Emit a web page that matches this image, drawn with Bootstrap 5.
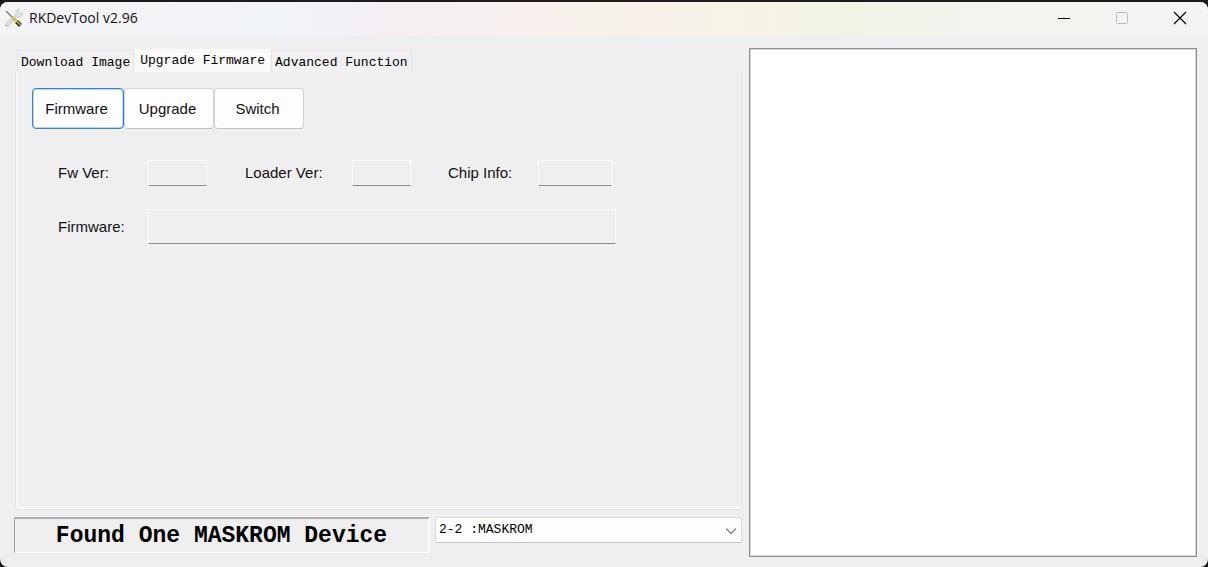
<!DOCTYPE html>
<html lang="en">
<head>
<meta charset="utf-8">
<meta name="viewport" content="width=device-width, initial-scale=1">
<title>RKDevTool v2.96</title>
<link href="https://cdn.jsdelivr.net/npm/bootstrap@5.3.0/dist/css/bootstrap.min.css" rel="stylesheet">
<style>
  body { background: #1c1a1b; color: #111; font: 15px/20px "Liberation Sans", Arial, sans-serif; }
  .page-frame { padding-top: 2px; }
  .app-window { background: #efeff0; border-radius: 8px; overflow: hidden; }
  .title-bar {
    height: 34px; padding: 0 20px 2px 5px;
    font: 14px/20px "Open Sans", "Noto Sans", sans-serif;
    background: linear-gradient(90deg, #f4f4f5 0%, #f0f3f7 24%, #f5eff4 32%, #f7f0ef 42%, #f7f1e9 54%, #f7f3e4 62%, #f1f4e4 70%, #f1f4ed 78%, #f2f4f0 86%, #f2f5f1 100%);
  }
  .title-label { gap: 6px; }
  .caption-group { gap: 42px; }
  .caption-btn { padding: 0; border: 0; background: none; width: 16px; height: 20px; display: flex; align-items: center; justify-content: center; }
  .workspace { display: grid; grid-template-columns: 13fr 8fr; gap: 7px; padding: 12px 11px 10px 14px; }
  .mono { font: 13px/16px "Liberation Mono", "Courier New", monospace; color: #000; }

  .tool-tabs { border: 0; padding-left: 3px; align-items: flex-end; flex-wrap: nowrap; }
  .tool-tabs .nav-link {
    border: 1px solid #e6e6e7; border-bottom: 0; border-radius: 0; margin: 0; color: #000;
    padding: 4px 3px; height: 22px; background: #f1f1f2; white-space: nowrap;
  }
  .tool-tabs .nav-link.active { background: #fafafb; height: 24px; padding: 4px 5px; border-color: #f3f3f4; color: #000; }
  .tool-pane { border: 1px solid #e7e7e8; border-top: 0; box-shadow: inset 2px -3px 0 #f7f7f8; padding: 16px 16px; margin-left: 1px; }

  .tool-btn {
    width: 90px; height: 41px; padding: 0 3px 0 0; border: 1px solid #d3d3d5; border-bottom-color: #c2c2c4; border-radius: 4px;
    background: #fdfdfe; color: #111; font-size: 15px; line-height: 20px;
  }
  .tool-btn.is-default { border: 1px solid #3484c8; width: 92px; box-shadow: inset 0 0 0 1px #b5d6ef; }

  .info-grid { display: grid; grid-template-columns: 90px 59px 38px 107px 59px 37px 90px 74px 4px; row-gap: 23px; align-items: center; padding: 31px 0 0 26px; }
  .info-grid .from-loader { grid-column: 4; }
  .info-grid .from-chip { grid-column: 7; }
  .info-grid .from-start { grid-column: 1; }
  .info-grid .span-rest { grid-column: 2 / -1; height: 35px; }
  .readout { min-width: 0; width: 100%; height: 26px; background: transparent; border: 1px solid #f9f9fa; border-bottom-color: #8d8d91; padding: 0 4px; border-radius: 0; }

  .status-row { display: grid; grid-template-columns: 416px 1fr; gap: 5px; margin: 7px 0 4px; align-items: start; }
  .status-panel {
    height: 36px; border: 1px solid #fafafa; border-top: 2px solid #b0b0b2; border-left: 1px solid #a4a4a6; border-right-width: 2px;
    font: bold 23px/34px "Liberation Mono", "Courier New", monospace; color: #000; text-align: center; white-space: nowrap;
  }
  .device-list { position: relative; }
  .device-list select {
    appearance: none; width: 100%; height: 26px; padding: 0 28px 0 3px; border: 1px solid #dadadc; border-bottom-color: #c4c4c6;
    border-radius: 2px; background: #fdfdfe;
  }
  .device-list svg { position: absolute; right: 5px; top: 10px; pointer-events: none; }
  .log-view { background: #fff; border: 1px solid #8e8e90; outline: 0; resize: none; width: 100%; height: 100%; min-height: 300px; display: block; border-radius: 0; box-shadow: inset 0 0 0 1px #d5d5d7; }
</style>
</head>
<body>
<div class="vh-100 page-frame">
<main class="app-window h-100 d-flex flex-column">
  <header class="title-bar d-flex align-items-center justify-content-between flex-shrink-0">
    <div class="d-flex align-items-center title-label">
      <svg width="18" height="20" viewBox="0 0 18 20" aria-hidden="true">
        <path d="M2 17 8 11" stroke="#c9ccd0" stroke-width="4" stroke-linecap="round"/>
        <path d="M2.500 16.500 9 10" stroke="#e4e6e9" stroke-width="2"/>
        <path d="M9 10 13 6" stroke="#cfd2d6" stroke-width="3"/>
        <path d="M11 7C10 4 12 1 15 1L13.500 4 15 6 17.500 4C18 8 15 10 12 9Z" fill="#dcdfe3" stroke="#c3c7cb" stroke-width=".6"/>
        <path d="M1 3 8 10" stroke="#858986" stroke-width="1.600"/>
        <path d="M7 9 11 13" stroke="#d3c043" stroke-width="3"/>
        <path d="m11.500 13.500 4 4" stroke="#34351f" stroke-width="4"/>
        <path d="m10.500 12 5 5" stroke="#d9c633" stroke-width="1.300"/>
      </svg>
      <span>RKDevTool v2.96</span>
    </div>
    <div class="d-flex align-items-center caption-group">
      <button type="button" class="caption-btn" aria-label="Minimize"><svg width="14" height="14" viewBox="0 0 14 14"><path d="M1 7.500h12" stroke="#000"/></svg></button>
      <button type="button" class="caption-btn" aria-label="Maximize" disabled><svg width="14" height="14" viewBox="0 0 14 14"><rect x="1.500" y="1.500" width="11" height="11" rx="1" fill="none" stroke="#bcbfbc"/></svg></button>
      <button type="button" class="caption-btn" aria-label="Close"><svg width="14" height="14" viewBox="0 0 14 14"><path d="m1 1 12 12M13 1 1 13" stroke="#000" stroke-width="1.200"/></svg></button>
    </div>
  </header>

  <div class="workspace flex-grow-1">
    <section class="d-flex flex-column">
      <ul class="nav nav-tabs tool-tabs mono" role="tablist">
        <li class="nav-item"><button class="nav-link" type="button" role="tab">Download Image</button></li>
        <li class="nav-item"><button class="nav-link active" type="button" role="tab" aria-selected="true">Upgrade Firmware</button></li>
        <li class="nav-item"><button class="nav-link" type="button" role="tab">Advanced Function</button></li>
      </ul>
      <div class="tool-pane flex-grow-1">
        <div class="d-flex">
          <button type="button" class="btn tool-btn is-default">Firmware</button>
          <button type="button" class="btn tool-btn">Upgrade</button>
          <button type="button" class="btn tool-btn">Switch</button>
        </div>
        <div class="info-grid">
          <label for="fw-ver">Fw Ver:</label>
          <input id="fw-ver" class="readout" type="text" readonly>
          <label for="loader-ver" class="from-loader">Loader Ver:</label>
          <input id="loader-ver" class="readout" type="text" readonly>
          <label for="chip-info" class="from-chip">Chip Info:</label>
          <input id="chip-info" class="readout" type="text" readonly>
          <label for="fw-path" class="from-start">Firmware:</label>
          <input id="fw-path" class="readout span-rest" type="text" readonly>
        </div>
      </div>
      <div class="status-row">
        <div class="status-panel" role="status">Found One MASKROM Device</div>
        <div class="device-list">
          <select class="mono" aria-label="Device"><option>2-2 :MASKROM</option></select>
          <svg width="12" height="8" viewBox="0 0 12 8" aria-hidden="true"><path d="m1 1.500 5 5 5-5" fill="none" stroke="#858587" stroke-width="1.300"/></svg>
        </div>
      </div>
    </section>
    <textarea class="log-view" aria-label="Log" readonly></textarea>
  </div>
</main>
</div>
<script src="https://cdn.jsdelivr.net/npm/bootstrap@5.3.0/dist/js/bootstrap.bundle.min.js"></script>
</body>
</html>
